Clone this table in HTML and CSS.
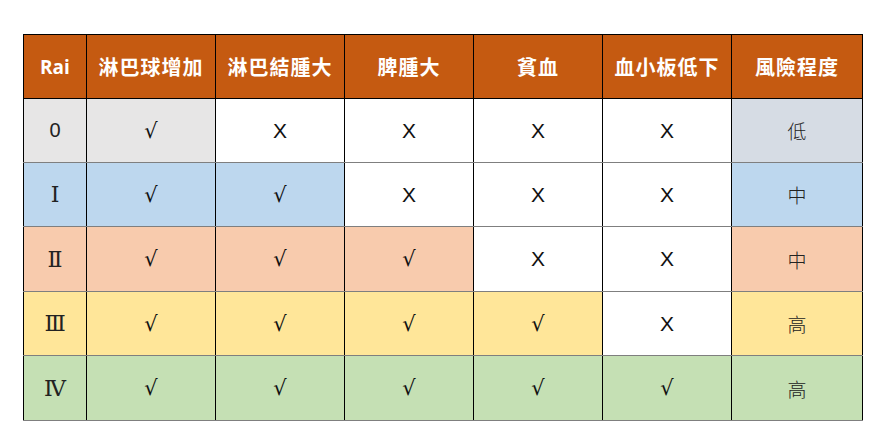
FILE: index.html
```html
<!DOCTYPE html>
<html lang="zh-Hant">
<head>
<meta charset="utf-8">
<link rel="stylesheet" href="styles.css">
</head>
<body>
<table class="rai">
  <colgroup>
    <col class="c-first"><col class="c-mid"><col class="c-mid"><col class="c-mid"><col class="c-mid"><col class="c-mid"><col class="c-last">
  </colgroup>
  <thead>
    <tr>
      <th class="latin">Rai</th><th>淋巴球增加</th><th>淋巴結腫大</th><th>脾腫大</th><th>貧血</th><th>血小板低下</th><th>風險程度</th>
    </tr>
  </thead>
  <tbody>
    <tr class="r0">
      <td class="stage zero">0</td><td class="ok gray">√</td><td class="no">X</td><td class="no">X</td><td class="no">X</td><td class="no">X</td><td class="risk slate">低</td>
    </tr>
    <tr class="r1">
      <td class="stage blue">Ⅰ</td><td class="ok blue">√</td><td class="ok blue">√</td><td class="no">X</td><td class="no">X</td><td class="no">X</td><td class="risk blue">中</td>
    </tr>
    <tr class="r2">
      <td class="stage peach">Ⅱ</td><td class="ok peach">√</td><td class="ok peach">√</td><td class="ok peach">√</td><td class="no">X</td><td class="no">X</td><td class="risk peach">中</td>
    </tr>
    <tr class="r3">
      <td class="stage yellow">Ⅲ</td><td class="ok yellow">√</td><td class="ok yellow">√</td><td class="ok yellow">√</td><td class="ok yellow">√</td><td class="no">X</td><td class="risk yellow">高</td>
    </tr>
    <tr class="r4">
      <td class="stage green">Ⅳ</td><td class="ok green">√</td><td class="ok green">√</td><td class="ok green">√</td><td class="ok green">√</td><td class="ok green">√</td><td class="risk green">高</td>
    </tr>
  </tbody>
</table>
</body>
</html>
```
FILE: styles.css
```css
html, body {
  margin: 0;
  padding: 0;
  background: #ffffff;
}

body {
  padding: 34px 0 0 23px;
  font-family: "Liberation Sans", "Noto Sans CJK TC", sans-serif;
  color: #000;
}

.rai {
  border-collapse: collapse;
  table-layout: fixed;
  width: 840px;
}

.c-first { width: 63px; }
.c-mid { width: 129px; }
.c-last { width: 131px; }

.rai th {
  height: 63px;
  padding: 0;
  background: #c55a11;
  color: #fff;
  font-family: "Noto Sans CJK TC", sans-serif;
  font-weight: 700;
  font-size: 20px;
  letter-spacing: 1px;
  border: 1px solid #000;
  text-align: center;
  vertical-align: middle;
}

.rai th.latin {
  font-family: "Open Sans", "Noto Sans CJK TC", sans-serif;
  font-size: 19px;
  letter-spacing: 0;
}

.rai td {
  height: 63px;
  padding: 0;
  text-align: center;
  vertical-align: middle;
  border-left: 1px solid #000;
  border-right: 1px solid #000;
  border-top: 1px solid #7f7f7f;
  border-bottom: 1px solid #7f7f7f;
  background: #fff;
  font-size: 18px;
}

.rai tr.r2 td, .rai tr.r4 td { height: 64px; }

.rai td.no {
  font-family: "Liberation Sans", sans-serif;
  font-size: 21px;
  color: #111;
}

.rai td.ok {
  font-family: "DejaVu Sans", "Liberation Serif", serif;
  font-size: 21px;
  color: #111;
}

.rai td.stage {
  font-family: "DejaVu Serif", "Liberation Serif", "Noto Sans CJK TC", serif;
  font-size: 22px;
  color: #222;
}

.rai td.stage.zero {
  font-family: "Liberation Sans", sans-serif;
  font-size: 20px;
  background: #e7e6e6;
}

.rai td.risk {
  font-family: "Noto Sans CJK TC", sans-serif;
  font-weight: 300;
  font-size: 19px;
  color: #222;
}

.gray { background: #e7e6e6 !important; }
.slate { background: #d6dce4 !important; }
.blue { background: #bdd7ee !important; }
.peach { background: #f8cbad !important; }
.yellow { background: #ffe699 !important; }
.green { background: #c5e0b4 !important; }
```
